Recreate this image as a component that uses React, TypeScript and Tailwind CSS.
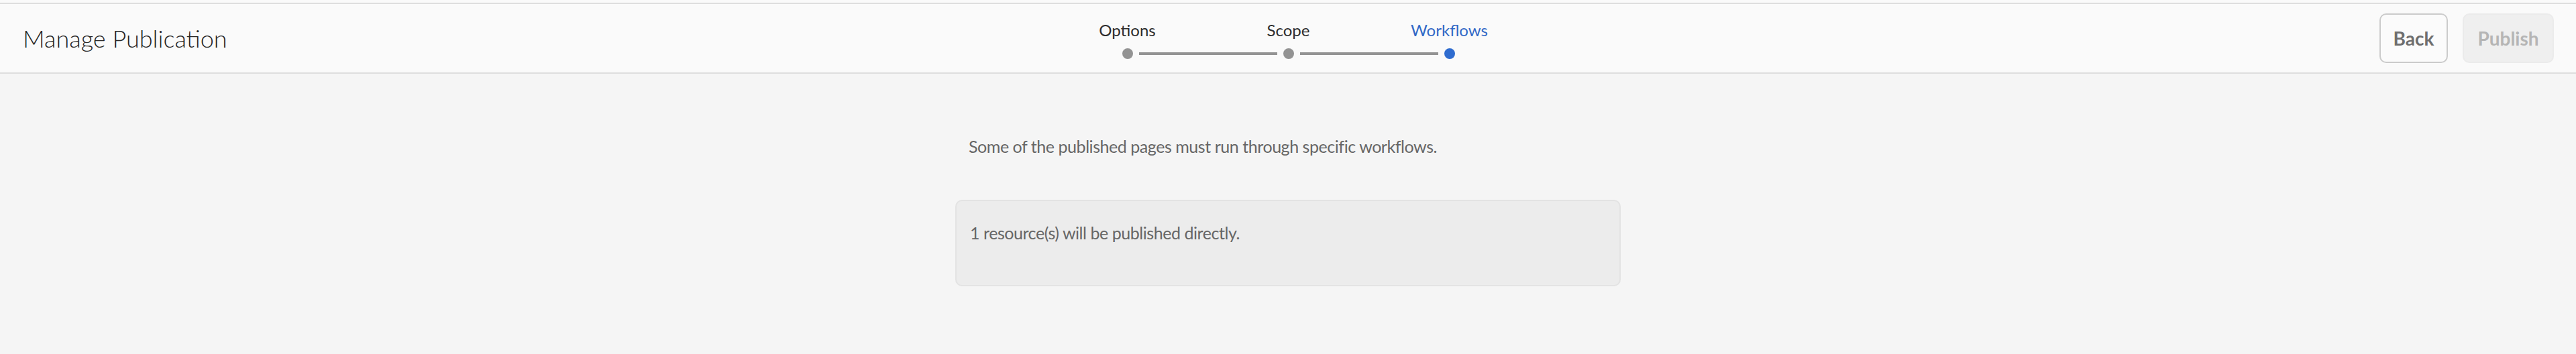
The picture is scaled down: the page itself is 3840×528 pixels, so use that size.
const steps = [
  { label: "Options", done: true },
  { label: "Scope", done: true },
  { label: "Workflows", done: false },
];

function StepList() {
  return (
    <ol className="flex self-start pt-[24px]">
      {steps.map((step, i) => {
        const active = i === steps.length - 1;
        return (
          <li key={step.label} className="flex w-[240px] flex-col items-center">
            <span
              className={`text-[24px] leading-[30px] ${active ? "text-[#3168c6]" : "text-[#2c2c2c]"}`}
            >
              {step.label}
            </span>
            <div className="mt-[12px] flex h-[16px] w-full items-center">
              <span className={`mr-[9px] h-[4px] flex-1 ${i === 0 ? "" : "bg-[#939393]"}`} />
              <span
                className={`h-[16px] w-[16px] rounded-full ${active ? "bg-[#2f6ccf]" : "bg-[#939393]"}`}
              />
              <span className={`ml-[9px] h-[4px] flex-1 ${active ? "" : "bg-[#939393]"}`} />
            </div>
          </li>
        );
      })}
    </ol>
  );
}

export default function App() {
  return (
    <div className="h-[528px] w-[3840px] bg-[#f5f5f5] font-['Lato','Open_Sans',sans-serif]">
      <div className="h-[4px] bg-[#fafafa]" />
      <header className="grid h-[106px] grid-cols-[1fr_auto_1fr] items-center border-y-2 border-[#dedede] bg-[#fafafa] pl-[34px] pr-[33px]">
        <h1 className="text-[36px] font-light leading-[44px] text-[#262626]">Manage Publication</h1>
        <StepList />
        <div className="flex justify-end gap-[22px]">
          <button className="h-[74px] w-[102px] rounded-[10px] border-2 border-[#cbcbcb] bg-[#fbfbfb] text-[28px] font-bold text-[#6e6e6e]">
            Back
          </button>
          <button
            disabled
            className="h-[74px] w-[136px] rounded-[10px] border-2 border-[#ebebeb] bg-[#efefef] text-[28px] font-bold text-[#b5b5b5]"
          >
            Publish
          </button>
        </div>
      </header>

      <main className="mx-auto w-[992px] pt-[92px]">
        <p className="pl-[20px] text-[25px] leading-[32px] tracking-[-0.45px] text-[#666666]">
          Some of the published pages must run through specific workflows.
        </p>
        <div className="mt-[64px] rounded-[10px] border-2 border-[#e3e3e3] bg-[#ececec] pb-[62px] pl-[20px] pt-[31px]">
          <p className="text-[25px] leading-[32px] tracking-[-0.45px] text-[#666666]">
            1 resource(s) will be published directly.
          </p>
        </div>
      </main>
    </div>
  );
}
